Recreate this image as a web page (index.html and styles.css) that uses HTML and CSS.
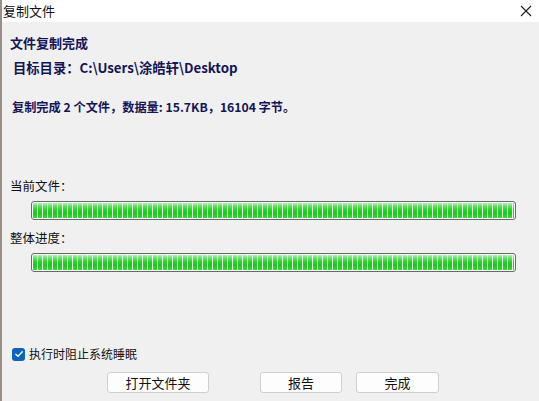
FILE: index.html
```html
<!DOCTYPE html>
<html lang="zh-CN">
<head>
<meta charset="utf-8">
<link rel="stylesheet" href="styles.css">
</head>
<body>
<div class="window">
  <div class="titlebar">
    <span class="title">复制文件</span>
    <svg class="close" width="12" height="12" viewBox="0 0 12 12"><path d="M1 1L11 11M11 1L1 11" stroke="#1a1a1a" stroke-width="1.1" fill="none"/></svg>
  </div>
  <div class="content">
    <div class="heading">文件复制完成</div>
    <div class="target">目标目录：C:\Users\涂皓轩\Desktop</div>
    <div class="summary">复制完成 2 个文件，数据量: 15.7KB，16104 字节。</div>
    <div class="label label-first">当前文件：</div>
    <div class="bar"><div class="fill"></div></div>
    <div class="label">整体进度：</div>
    <div class="bar"><div class="fill"></div></div>
    <div class="spacer"></div>
    <label class="check">
      <span class="box"><svg width="10" height="10" viewBox="0 0 10 10"><path d="M1.8 5.2L4 7.3L8.3 2.8" stroke="#fff" stroke-width="1.3" fill="none" stroke-linecap="round" stroke-linejoin="round"/></svg></span>
      <span>执行时阻止系统睡眠</span>
    </label>
    <div class="buttons">
      <button class="btn btn-open">打开文件夹</button>
      <button class="btn btn-report">报告</button>
      <button class="btn btn-done">完成</button>
    </div>
  </div>
</div>
</body>
</html>
```
FILE: styles.css
```css
* { box-sizing: border-box; }
html, body { margin: 0; padding: 0; }
body {
  width: 539px;
  height: 401px;
  overflow: hidden;
  font-family: "Noto Sans CJK SC", "Noto Sans", sans-serif;
  background: #f0f0f0;
}
.window {
  width: 539px;
  height: 401px;
  display: flex;
  flex-direction: column;
  border-left: 2px solid #9a8f86;
  background: #f0f0f0;
}
.titlebar {
  height: 22px;
  flex: none;
  background: #ffffff;
  display: flex;
  align-items: center;
  justify-content: space-between;
  padding: 0 7px 0 1px;
}
.title {
  font-size: 13px;
  color: #111;
  line-height: 22px;
}
.close { display: block; margin-top: -1px; }
.content {
  flex: 1;
  display: flex;
  flex-direction: column;
  padding: 12px 0 8px 8px;
}
.heading {
  font-size: 13px;
  font-weight: bold;
  color: #14145a;
  line-height: 18px;
}
.target {
  margin-top: 6px;
  margin-left: 3px;
  font-size: 13.3px;
  font-weight: bold;
  color: #14145a;
  line-height: 20px;
}
.summary {
  margin-top: 20px;
  margin-left: 2px;
  font-size: 12.2px;
  font-weight: bold;
  color: #14145a;
  line-height: 18px;
}
.label {
  font-size: 12.5px;
  color: #111;
  line-height: 18px;
  margin-top: 9px;
}
.label-first { margin-top: 61px; }
.bar {
  margin-left: 21px;
  width: 485px;
  height: 19px;
  border: 1.5px solid #6a6a6a;
  border-radius: 3px;
  background: #fbfbfb;
  padding: 1px;
  margin-top: 6px;
}
.fill {
  height: 100%;
  background:
    repeating-linear-gradient(to right, transparent 0 3.6px, #e6f4e6 3.6px 5px),
    linear-gradient(to bottom, #b0eeb0 0%, #66e066 20%, #2ad22a 45%, #1cc81c 70%, #40d540 100%);
}
.spacer { flex: 1; }
.check {
  display: flex;
  align-items: center;
  gap: 4px;
  margin-left: 2px;
  font-size: 12px;
  color: #111;
  line-height: 16px;
}
.box {
  width: 13px;
  height: 13px;
  border-radius: 3px;
  background: #0a64c0;
  display: flex;
  align-items: center;
  justify-content: center;
}
.box svg { display: block; }
.buttons {
  display: flex;
  margin-top: 10px;
  margin-left: 97px;
}
.btn {
  height: 21px;
  background: #fdfdfd;
  border: 1px solid #cfcfcf;
  border-radius: 3px;
  font-family: "Noto Sans CJK SC", "Noto Sans", sans-serif;
  font-size: 13px;
  color: #111;
  padding: 0;
  line-height: 19px;
}
.btn-open { width: 102px; }
.btn-report { width: 82px; margin-left: 51px; }
.btn-done { width: 83px; margin-left: 14px; }
```
